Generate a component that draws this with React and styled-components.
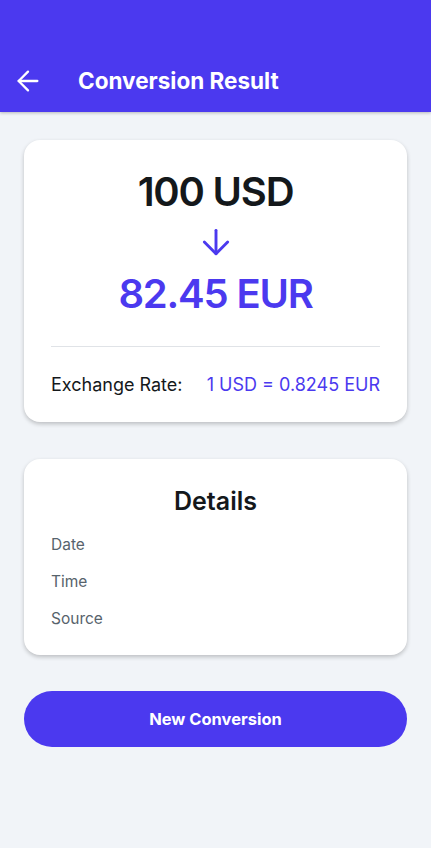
import React from 'react'
import styled, { createGlobalStyle } from 'styled-components'
import { ArrowLeft, ArrowDown } from 'lucide-react'

const GlobalStyle = createGlobalStyle`
    * { box-sizing: border-box; }
    body {
        margin: 0;
        background: #f1f4f8;
        font-family: Inter, "Noto Sans", sans-serif;
    }
`

const Page = styled.div`
    min-height: 848px;
    background: #f1f4f8;
`

const Header = styled.header`
    height: 112px;
    background: #4b39ef;
    display: flex;
    align-items: center;
    padding: 50px 12px 0 12px;
    box-shadow: 0 1px 3px rgba(0, 0, 0, 0.25);
    color: #fff;
    h1 {
        margin: 0 0 0 34px;
        font-size: 22.5px;
        font-weight: 700;
        line-height: 28px;
    }
`

const IconButton = styled.button`
    background: none;
    border: none;
    padding: 0;
    color: #fff;
    display: flex;
    align-items: center;
    width: 32px;
    height: 32px;
`

const Content = styled.main`
    padding: 28px 24px;
    display: flex;
    flex-direction: column;
    gap: 37px;
`

const Card = styled.section`
    background: #fff;
    border-radius: 16px;
    box-shadow: 0 2px 4px rgba(0, 0, 0, 0.22);
    padding: ${(p) => p.$padding};
`

const Amount = styled.div`
    text-align: center;
    font-size: 40px;
    font-weight: 600;
    letter-spacing: -1.2px;
    line-height: 48px;
    color: ${(p) => (p.$accent ? '#4b39ef' : '#14181b')};
`

const ArrowWrap = styled.div`
    display: flex;
    justify-content: center;
    color: #4b39ef;
    margin: 6px 0 8px;
`

const Divider = styled.hr`
    border: none;
    border-top: 1px solid #e0e3e7;
    margin: 28px 0 26px;
`

const RateRow = styled.div`
    display: flex;
    justify-content: space-between;
    font-size: 18px;
    line-height: 24px;
    color: #14181b;
    span:last-child {
        color: #4b39ef;
    }
`

const CardTitle = styled.h2`
    margin: 0 0 18px;
    text-align: center;
    font-size: 25px;
    font-weight: 600;
    line-height: 30px;
    color: #14181b;
`

const DetailList = styled.div`
    display: flex;
    flex-direction: column;
    gap: 15px;
`

const DetailItem = styled.div`
    font-size: 15.5px;
    line-height: 22px;
    color: #57636c;
`

const PrimaryButton = styled.button`
    height: 56px;
    border: none;
    border-radius: 28px;
    background: #4b39ef;
    color: #fff;
    font-family: Inter, sans-serif;
    font-size: 16.5px;
    font-weight: 700;
    margin-top: -1px;
`

const App = () => (
    <Page>
        <GlobalStyle />
        <Header>
            <IconButton aria-label="Back">
                <ArrowLeft size={32} strokeWidth={2.3} absoluteStrokeWidth />
            </IconButton>
            <h1>Conversion Result</h1>
        </Header>
        <Content>
            <Card $padding="28px 27px 25px">
                <Amount>100 USD</Amount>
                <ArrowWrap>
                    <ArrowDown size={40} strokeWidth={2.9} absoluteStrokeWidth />
                </ArrowWrap>
                <Amount $accent>82.45 EUR</Amount>
                <Divider />
                <RateRow>
                    <span>Exchange Rate:</span>
                    <span>1 USD = 0.8245 EUR</span>
                </RateRow>
            </Card>
            <Card $padding="27px 27px 25px">
                <CardTitle>Details</CardTitle>
                <DetailList>
                    <DetailItem>Date</DetailItem>
                    <DetailItem>Time</DetailItem>
                    <DetailItem>Source</DetailItem>
                </DetailList>
            </Card>
            <PrimaryButton>New Conversion</PrimaryButton>
        </Content>
    </Page>
)

export default App
